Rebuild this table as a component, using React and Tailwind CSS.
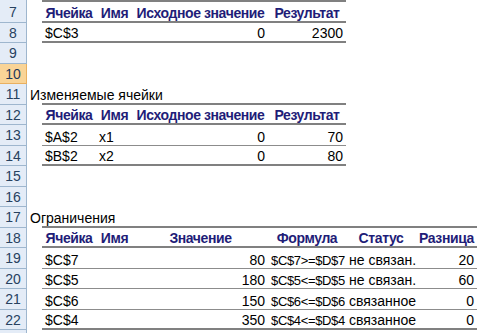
const COLS = {
  B: "w-[54px]",
  C: "w-[37px]",
  D: "w-[135px]",
  E: "w-[78px]",
  F: "w-[70px]",
  G: "w-[61px]",
};

// row number, height, table kind
const rows = [
  { n: 7, h: "h-[21px]", kind: "head1", line: "thick" },
  { n: 8, h: "h-[20px]", kind: "t1", cells: ["$C$3", "", "0", "2300"], line: "thick" },
  { n: 9, h: "h-[21px]" },
  { n: 10, h: "h-[20px]", selected: true },
  { n: 11, h: "h-[21px]", label: "Изменяемые ячейки", line: "thick", span: 4 },
  { n: 12, h: "h-[20px]", kind: "head1", line: "thick" },
  { n: 13, h: "h-[21px]", kind: "t1", cells: ["$A$2", "x1", "0", "70"], line: "thin" },
  { n: 14, h: "h-[20px]", kind: "t1", cells: ["$B$2", "x2", "0", "80"], line: "thick" },
  { n: 15, h: "h-[21px]" },
  { n: 16, h: "h-[20px]" },
  { n: 17, h: "h-[21px]", label: "Ограничения", line: "thick", span: 6 },
  { n: 18, h: "h-[20px]", kind: "head3", line: "thick" },
  { n: 19, h: "h-[21px]", kind: "t3", cells: ["$C$7", "", "80", "$C$7>=$D$7", "не связан.", "20"], line: "thin" },
  { n: 20, h: "h-[20px]", kind: "t3", cells: ["$C$5", "", "180", "$C$5<=$D$5", "не связан.", "60"], line: "thin" },
  { n: 21, h: "h-[21px]", kind: "t3", cells: ["$C$6", "", "150", "$C$6<=$D$6", "связанное", "0"], line: "thin" },
  { n: 22, h: "h-[20px]", kind: "t3", cells: ["$C$4", "", "350", "$C$4<=$D$4", "связанное", "0"], line: "thick" },
];

const lineCls = (line) =>
  line === "thick"
    ? "border-b-2 border-[#808080]"
    : line === "thin"
    ? "border-b border-[#8c8c8c]"
    : "";

function Cell({ w, line, align = "left", bold, tight, children }) {
  return (
    <div
      className={`${w} h-full flex items-end pb-[1px] px-[3px] whitespace-nowrap ${lineCls(line)} ${
        align === "right" ? "justify-end" : align === "center" ? "justify-center" : "justify-start"
      } ${bold ? "font-bold text-[#1f1d78] tracking-[-0.4px]" : "text-black"} ${
        tight ? "text-[13px] tracking-[-0.35px] px-[1px]" : ""
      }`}
    >
      {children}
    </div>
  );
}

function RowHeader({ n, selected }) {
  return (
    <div
      className={`w-[27px] h-full shrink-0 flex items-center justify-center border-r border-b ${
        selected
          ? "bg-[#f9d497] border-[#e9b060] text-[#1e395b]"
          : "bg-[#e4ecf7] border-[#9eb6ce] text-[#27415f]"
      }`}
    >
      {n}
    </div>
  );
}

function RowBody({ r }) {
  if (r.kind === "head1") {
    return (
      <>
        <Cell w={COLS.B} line={r.line} align="center" bold>Ячейка</Cell>
        <Cell w={COLS.C} line={r.line} align="center" bold>Имя</Cell>
        <Cell w={COLS.D} line={r.line} align="center" bold>Исходное значение</Cell>
        <Cell w={COLS.E} line={r.line} align="center" bold>Результат</Cell>
      </>
    );
  }
  if (r.kind === "t1") {
    const [a, b, c, d] = r.cells;
    return (
      <>
        <Cell w={COLS.B} line={r.line}>{a}</Cell>
        <Cell w={COLS.C} line={r.line}>{b}</Cell>
        <Cell w={COLS.D} line={r.line} align="right">{c}</Cell>
        <Cell w={COLS.E} line={r.line} align="right">{d}</Cell>
      </>
    );
  }
  if (r.kind === "head3") {
    return (
      <>
        <Cell w={COLS.B} line={r.line} align="center" bold>Ячейка</Cell>
        <Cell w={COLS.C} line={r.line} align="center" bold>Имя</Cell>
        <Cell w={COLS.D} line={r.line} align="center" bold>Значение</Cell>
        <Cell w={COLS.E} line={r.line} align="center" bold>Формула</Cell>
        <Cell w={COLS.F} line={r.line} align="center" bold>Статус</Cell>
        <Cell w={COLS.G} line={r.line} align="center" bold>Разница</Cell>
      </>
    );
  }
  if (r.kind === "t3") {
    const [a, b, c, d, e, f] = r.cells;
    return (
      <>
        <Cell w={COLS.B} line={r.line}>{a}</Cell>
        <Cell w={COLS.C} line={r.line}>{b}</Cell>
        <Cell w={COLS.D} line={r.line} align="right">{c}</Cell>
        <Cell w={COLS.E} line={r.line} tight>{d}</Cell>
        <Cell w={COLS.F} line={r.line}>{e}</Cell>
        <Cell w={COLS.G} line={r.line} align="right">{f}</Cell>
      </>
    );
  }
  return null;
}

export default function App() {
  return (
    <div
      className="w-[488px] h-[333px] overflow-hidden bg-white text-[14px] leading-none"
      style={{ fontFamily: '"Liberation Sans", Arial, sans-serif' }}
    >
      {/* partial row 6 */}
      <div className="flex h-[2px]">
        <div className="w-[27px] h-full border-r border-[#9eb6ce] bg-[#e4ecf7]" />
        <div className="w-[15px]" />
        <div className="w-[304px] h-full bg-[#808080]" />
      </div>

      {rows.map((r) => (
        <div key={r.n} className={`flex ${r.h}`}>
          <RowHeader n={r.n} selected={r.selected} />
          {r.label ? (
            <div className="relative flex-1 h-full flex">
              <span className="absolute left-[3px] bottom-[3px] whitespace-nowrap">{r.label}</span>
              <div className="w-[15px]" />
              <div
                className={`h-full ${r.span === 6 ? "w-[435px]" : "w-[304px]"} border-b-2 border-[#808080]`}
              />
            </div>
          ) : (
            <div className="flex h-full">
              <div className="w-[15px]" />
              <RowBody r={r} />
            </div>
          )}
        </div>
      ))}

      {/* partial row 23 */}
      <div className="flex h-[3px]">
        <div className="w-[27px] h-full border-r border-[#9eb6ce] bg-[#e4ecf7]" />
      </div>
    </div>
  );
}
